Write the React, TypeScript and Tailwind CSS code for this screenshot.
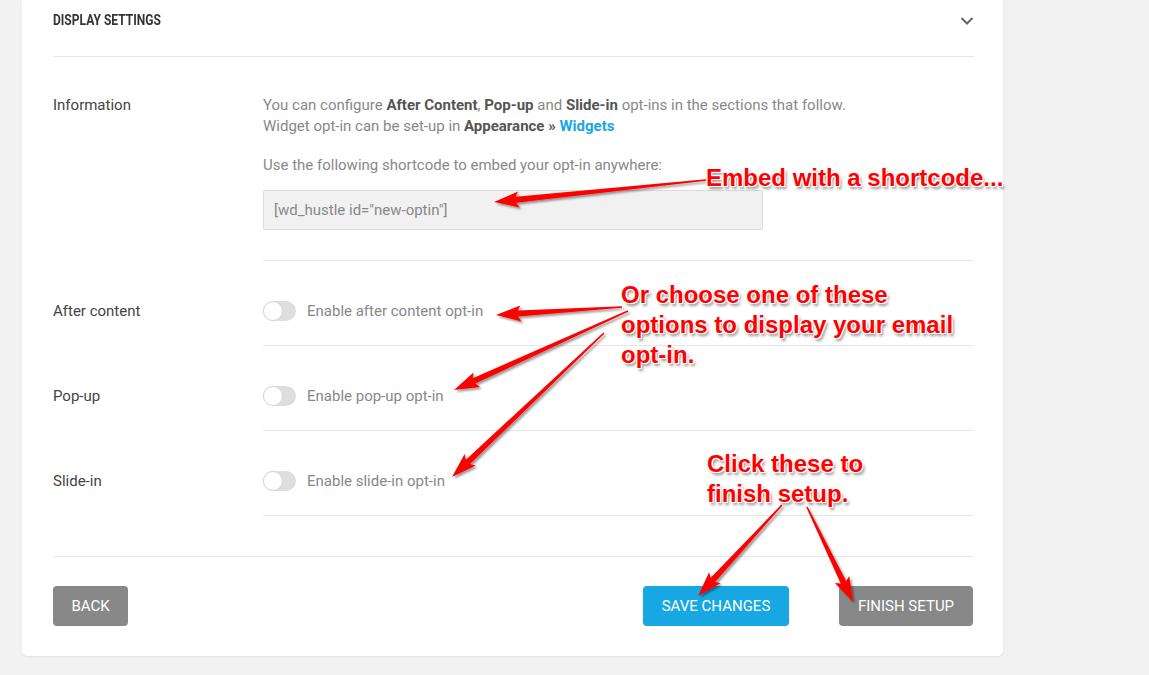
import React from 'react';

const arrows = [
  { x1: 706, y1: 180, x2: 494, y2: 202 },
  { x1: 622, y1: 307, x2: 496, y2: 315 },
  { x1: 628, y1: 311, x2: 454, y2: 390 },
  { x1: 604, y1: 333, x2: 452, y2: 477 },
  { x1: 782, y1: 505, x2: 698, y2: 596 },
  { x1: 807, y1: 507, x2: 853, y2: 602 },
];

// tapered arrow polygon: thin tail, wide head
function arrowPoints(a: { x1: number; y1: number; x2: number; y2: number }) {
  const dx = a.x2 - a.x1;
  const dy = a.y2 - a.y1;
  const len = Math.hypot(dx, dy);
  const ux = dx / len;
  const uy = dy / len;
  const nx = -uy;
  const ny = ux;
  const L = 22;
  const W = 8;
  const w0 = 0.8;
  const w1 = 3;
  const bx = a.x2 - ux * L;
  const by = a.y2 - uy * L;
  const pts = [
    [a.x1 + nx * w0, a.y1 + ny * w0],
    [bx + nx * w1, by + ny * w1],
    [bx + nx * W - ux * 3, by + ny * W - uy * 3],
    [a.x2, a.y2],
    [bx - nx * W - ux * 3, by - ny * W - uy * 3],
    [bx - nx * w1, by - ny * w1],
    [a.x1 - nx * w0, a.y1 - ny * w0],
  ];
  return pts.map((p) => `${p[0].toFixed(1)},${p[1].toFixed(1)}`).join(' ');
}

function Toggle() {
  return (
    <span className="relative inline-block h-[20px] w-[33px] rounded-full bg-[#dedede]">
      <span className="absolute left-0 top-0 h-[20px] w-[20px] rounded-full border border-[#d4d4d4] bg-white" />
    </span>
  );
}

function ToggleRow({ label, text }: { label: string; text: string }) {
  return (
    <div className="flex">
      <div className="w-[210px] pt-[40px] text-[15px] leading-[20px] text-[#444]">{label}</div>
      <div className="flex flex-1 items-center gap-[11px] border-b border-[#e6e6e6] pb-[24px] pt-[40px]">
        <Toggle />
        <span className="text-[15px] leading-[20px] text-[#888]">{text}</span>
      </div>
    </div>
  );
}

const note =
  "absolute font-['Liberation_Sans',Arial,sans-serif] text-[24px] font-bold leading-[30px] text-[#ff0000] [text-shadow:1px_1px_0_#fff,-1px_-1px_0_#fff,1px_-1px_0_#fff,-1px_1px_0_#fff,2px_3px_3px_rgba(0,0,0,0.45)]";

export default function App() {
  return (
    <div className="relative min-h-[675px] overflow-hidden bg-[#f2f2f2] font-['Roboto',sans-serif]">
      <div className="ml-[22px] w-[981px] rounded-b-[5px] bg-white pb-[30px] pl-[31px] pr-[30px] shadow-[0_1px_2px_rgba(0,0,0,0.08)]">
        {/* header */}
        <div className="flex h-[57px] items-start justify-between border-b border-[#e6e6e6] pt-[12px]">
          <h2 className="origin-left scale-x-[0.86] text-[14px] font-bold leading-[16px] text-[#333]">DISPLAY SETTINGS</h2>
          <svg width="14" height="10" viewBox="0 0 14 10" className="mr-[-1px] mt-[4px]">
            <path d="M1.5 2 L7 7.5 L12.5 2" fill="none" stroke="#666" strokeWidth="2" />
          </svg>
        </div>

        {/* information */}
        <div className="flex">
          <div className="w-[210px] pt-[38px] text-[15px] leading-[21px] text-[#444]">Information</div>
          <div className="flex-1 border-b border-[#e6e6e6] pb-[30px] pt-[38px] text-[15px] leading-[21px] text-[#888]">
            <p>
              You can configure <b className="text-[#555]">After Content</b>, <b className="text-[#555]">Pop-up</b> and{' '}
              <b className="text-[#555]">Slide-in</b> opt-ins in the sections that follow.
            </p>
            <p>
              Widget opt-in can be set-up in <b className="text-[#555]">Appearance »</b>{' '}
              <b className="text-[#17a8e3]">Widgets</b>
            </p>
            <p className="mt-[18px]">Use the following shortcode to embed your opt-in anywhere:</p>
            <div className="mt-[14px] flex h-[40px] w-[500px] items-center rounded-[2px] border border-[#dcdcdc] bg-[#f1f1f1] px-[10px] text-[15px] text-[#888]">
              [wd_hustle id="new-optin"]
            </div>
          </div>
        </div>

        <ToggleRow label="After content" text="Enable after content opt-in" />
        <ToggleRow label="Pop-up" text="Enable pop-up opt-in" />
        <ToggleRow label="Slide-in" text="Enable slide-in opt-in" />

        {/* footer */}
        <div className="mt-[40px] flex items-center justify-between border-t border-[#e6e6e6] pt-[29px]">
          <button className="h-[40px] w-[75px] rounded-[4px] bg-[#888] text-[15px] text-white">BACK</button>
          <div className="flex gap-[50px]">
            <button className="h-[40px] w-[146px] rounded-[4px] bg-[#17a8e3] text-[15px] text-white">SAVE CHANGES</button>
            <button className="h-[40px] w-[134px] rounded-[4px] bg-[#888] text-[15px] text-white">FINISH SETUP</button>
          </div>
        </div>
      </div>

      {/* annotations */}
      <svg className="pointer-events-none absolute left-0 top-0" width="1149" height="675">
        <defs>
          <filter id="sh" x="-20%" y="-20%" width="140%" height="140%">
            <feDropShadow dx="2" dy="2" stdDeviation="1.2" floodColor="#000" floodOpacity="0.4" />
          </filter>
        </defs>
        {arrows.map((a, i) => (
          <polygon key={i} points={arrowPoints(a)} fill="#ff0000" filter="url(#sh)" />
        ))}
      </svg>
      <div className={`${note} left-[706px] top-[163px]`}>Embed with a shortcode...</div>
      <div className={`${note} left-[621px] top-[280px]`}>
        Or choose one of these
        <br />
        options to display your email
        <br />
        opt-in.
      </div>
      <div className={`${note} left-[707px] top-[449px]`}>
        Click these to
        <br />
        finish setup.
      </div>
    </div>
  );
}
